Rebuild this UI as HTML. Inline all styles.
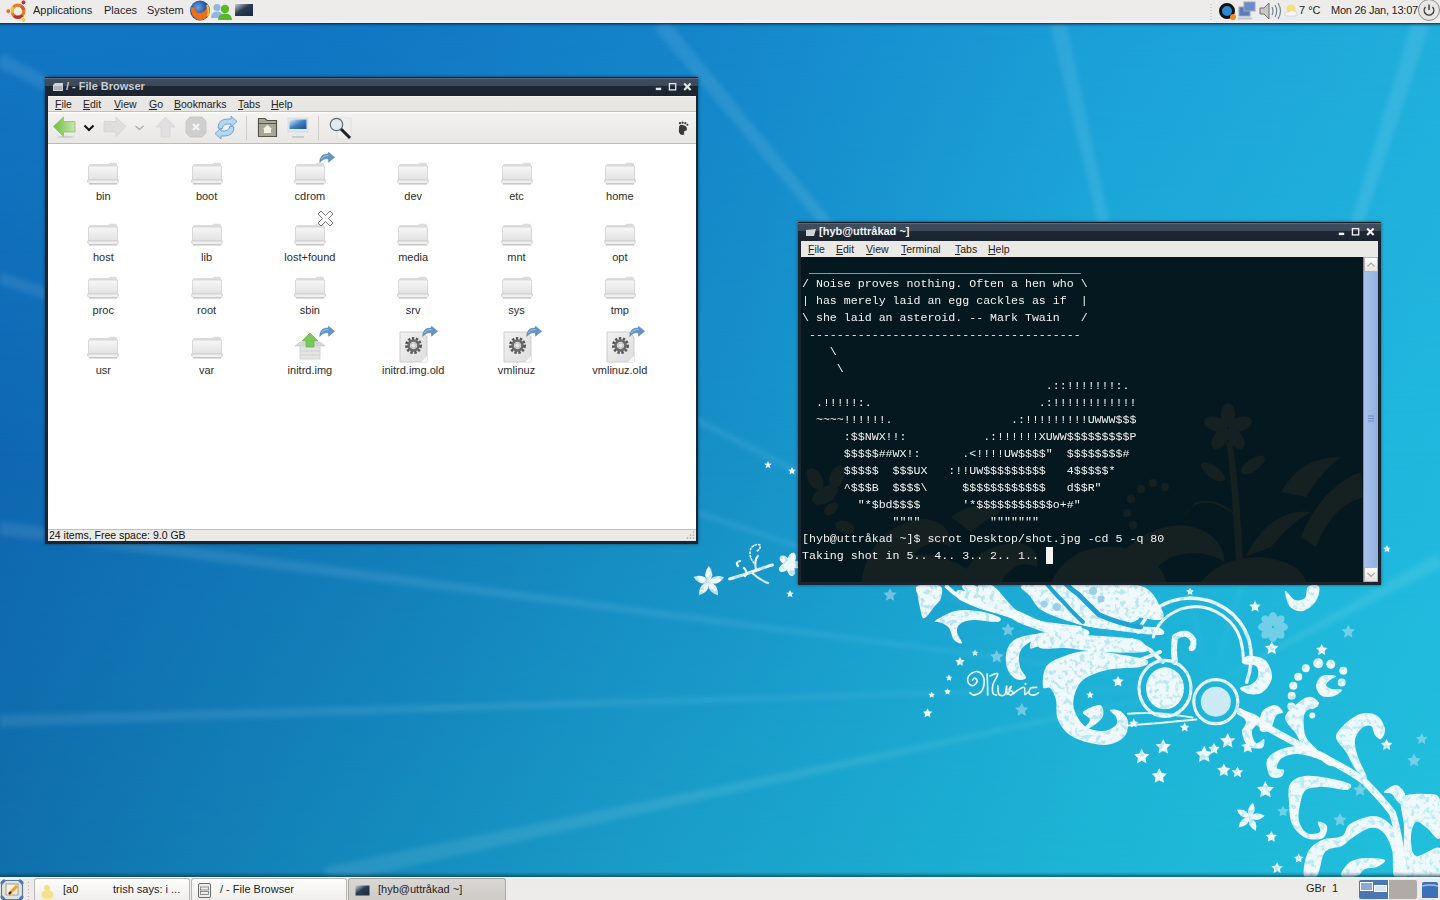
<!DOCTYPE html>
<html><head><meta charset="utf-8">
<style>
*{margin:0;padding:0;box-sizing:border-box}
html,body{width:1440px;height:900px;overflow:hidden;font-family:"Liberation Sans",sans-serif;font-size:12px;color:#222}
.abs{position:absolute}
#bg0{left:0;top:0;width:1440px;height:450px;background:linear-gradient(to right,#1278c5 0px,#1076c4 300px,#1586cc 725px,#1b9fd8 1100px,#21aedc 1440px)}
#bg0b{left:0;top:0;width:1440px;height:450px;background:linear-gradient(to right,#0f67b2 0px,#1279b8 365px,#1791c8 745px,#1eaed8 1100px,#20b8de 1440px);-webkit-mask-image:linear-gradient(to bottom,transparent,#000)}
#bg1{left:0;top:450px;width:1440px;height:450px;background:linear-gradient(to right,#0f67b2 0px,#1279b8 365px,#1791c8 745px,#1eaed8 1100px,#20b8de 1440px)}
#bg1b{left:0;top:450px;width:1440px;height:450px;background:linear-gradient(to right,#1070aa 0px,#1387b9 305px,#1a9fc8 655px,#1cb4d4 1055px,#22c0dc 1440px);-webkit-mask-image:linear-gradient(to bottom,transparent,#000)}

/* top panel */
#toppanel{left:0;top:0;width:1440px;height:23px;background:linear-gradient(#edecea 0,#edecea 16px,#e9ede9 16px,#eceae8 18px,#f0e8e8 19px,#eef2f6 21px,#eef2f6 23px)}
#topshadow{left:0;top:23px;width:1440px;height:4px;background:linear-gradient(rgba(10,30,50,.8),rgba(10,40,70,.25) 50%,rgba(0,0,0,0))}
.ptxt{position:absolute;top:4px;font-size:11px;color:#1e1e1e}

/* bottom panel */
#botpanel{left:0;top:877px;width:1440px;height:23px;background:linear-gradient(#e8fafa 0,#e8fafa 1px,#ecebe9 2px,#edecea 100%)}
#botshadow{left:0;top:872px;width:1440px;height:5px;background:linear-gradient(rgba(0,0,0,0),rgba(10,40,60,.25) 50%,rgba(15,60,80,.75))}

/* windows */
.win{position:absolute;background:#1b2530;box-shadow:0 0 3px rgba(0,0,0,.5)}
.title{position:absolute;left:0;top:0;right:0;height:19px;background:linear-gradient(#0e1620 0,#0e1620 1px,#6a7580 1px,#4e5c6b 2px,#3f4d5c 2px,#3a4857 9px,#1e2834 9px,#1b2430 19px)}
.ttxt{position:absolute;top:3px;font-weight:bold;font-size:11px}
.menubar{position:absolute;background:#ebe9e6}
.mi{position:absolute;top:2px;font-size:10.5px;color:#222}
.lbl{position:absolute;width:100px;text-align:center;font-size:11px;line-height:14px;color:#2c2c2c}
.ico{position:absolute;overflow:visible}
#tt{position:absolute;left:1px;top:1px;font-family:"Liberation Mono",monospace;font-size:11.62px;line-height:17px;color:#f2f2f2;white-space:pre}
.task{position:absolute;top:1px;height:22px;border:1px solid #b9b7b3;border-bottom:none;border-radius:3px 3px 0 0;background:linear-gradient(#fdfdfc,#efeeec)}
.ttask{position:absolute;top:4px;font-size:11px;color:#222}
</style></head><body>
<svg width="0" height="0" style="position:absolute">
<defs>
<linearGradient id="fg" x1="0" y1="0" x2="0" y2="1"><stop offset="0" stop-color="#f7f7f7"/><stop offset="1" stop-color="#e2e2e2"/></linearGradient>
<linearGradient id="dg" x1="0" y1="0" x2="1" y2="1"><stop offset="0" stop-color="#f2f2f2"/><stop offset="1" stop-color="#dcdcdc"/></linearGradient>
<symbol id="folder" viewBox="0 0 32 23">
 <path d="M2 3.5 Q2 2 3.5 2 L21 2 L23 0.8 L28 0.8 Q30 0.8 30 2.5 L30 18 L2 18 Z" fill="#dcdcdc"/>
 <path d="M1.5 4 L30.5 4 L30.5 18 L1.5 18 Z" fill="url(#fg)" stroke="#d0d0d0" stroke-width="0.8"/>
 <path d="M0.5 18 L31.5 18 L31 20.5 Q30.5 21.5 29 21.5 L3 21.5 Q1.5 21.5 1 20.5 Z" fill="#f0f0f0" stroke="#c8c8c8" stroke-width="0.8"/>
 <path d="M2 22 L30 22" stroke="#bdbdbd" stroke-width="1"/>
</symbol>
<symbol id="doc" viewBox="0 0 32 32">
 <path d="M3 1 L25 1 L30 6 L30 31 L3 31 Z" fill="url(#dg)" stroke="#c4c4c4" stroke-width="0.8"/>
 <path d="M24 31 L30 25 L30 31 Z" fill="#f8f8f8"/>
 <g transform="translate(16.5,14.5)">
  <circle r="7" fill="none" stroke="#555" stroke-width="3" stroke-dasharray="2.3 1.6"/>
  <circle r="5" fill="none" stroke="#6a6a6a" stroke-width="2.6"/>
  <circle r="2.6" fill="#e8e8e8" stroke="#888" stroke-width="0.5"/>
 </g>
</symbol>
<symbol id="pkg" viewBox="0 0 32 30">
 <rect x="6" y="15" width="20" height="12" fill="#e4e4e4" stroke="#cfcfcf" stroke-width="0.8"/>
 <path d="M6 19 H26 M6 23 H26" stroke="#d0d0d0" stroke-width="1"/>
 <path d="M1 14 L6 10 L26 10 L31 14 Z" fill="#d8d8d8" stroke="#c2c2c2" stroke-width="0.6"/>
 <path d="M16 1 L24 9 L20 9 L20 15 L12 15 L12 9 L8 9 Z" fill="#7cc75a" stroke="#5fa843" stroke-width="0.6"/>
</symbol>
<symbol id="emb" viewBox="0 0 16 11">
 <path d="M0.8 10.5 C0.5 5 4 1.5 9 2.2 L9.5 0.2 L15.6 5.2 L9.6 10.2 L9.4 7 C6 6.2 3 7.5 0.8 10.5 Z" fill="#6494c4" stroke="#4f7fae" stroke-width="0.5"/>
 <path d="M2.5 7 C3.5 4.5 6 3.4 9.5 3.6" fill="none" stroke="#a8c8e8" stroke-width="0.9"/>
</symbol>
<symbol id="xemb" viewBox="0 0 17 17">
 <path d="M4 1 L8.5 5.5 L13 1 L16 4 L11.5 8.5 L16 13 L13 16 L8.5 11.5 L4 16 L1 13 L5.5 8.5 L1 4 Z" fill="#fff" stroke="#6a6a6a" stroke-width="0.9"/>
</symbol>
</defs></svg>
<div id="bg0" class="abs"></div><div id="bg0b" class="abs"></div>
<div id="bg1" class="abs"></div><div id="bg1b" class="abs"></div>

<svg class="abs" style="left:0;top:0" width="1440" height="900">
<defs><filter id="grg" x="0" y="0" width="100%" height="100%" filterUnits="userSpaceOnUse"><feTurbulence type="fractalNoise" baseFrequency="0.2" numOctaves="3" seed="3" result="n"/><feColorMatrix in="n" type="matrix" values="0 0 0 0 0  0 0 0 0 0  0 0 0 0 0  0 0 0 -6 4.1" result="a0"/><feComponentTransfer in="a0" result="a"><feFuncA type="linear" slope="0.25" intercept="0.75"/></feComponentTransfer><feComposite in="SourceGraphic" in2="a" operator="in"/></filter><filter id="blr" x="-10%" y="-10%" width="120%" height="120%"><feGaussianBlur stdDeviation="2.5"/></filter></defs>
<g fill="#ffffff" opacity="0.09" filter="url(#blr)"><polygon points="1210,685 1065.8,21.2 1050.2,24.8"/><polygon points="1210,685 1429.6,25.7 1412.4,20.3"/><polygon points="1210,685 666.2,17.9 653.8,28.1"/><polygon points="1210,685 0.9,521.1 -0.9,534.9"/><polygon points="1210,685 -0.2,715.0 0.2,727.0"/><polygon points="1210,685 324.1,867.2 327.9,884.8"/><polygon points="1210,685 1.9,272.3 -1.9,283.7"/><polygon points="1210,685 3.2,53.8 -3.2,66.2"/><polygon points="1210,685 1443.3,566.2 1436.7,553.8"/></g>
<g fill="#c4e6f2" opacity="0.5"><polygon points="890.0,588.0 892.1,592.2 896.7,592.8 893.3,596.1 894.1,600.7 890.0,598.5 885.9,600.7 886.7,596.1 883.3,592.8 887.9,592.2"/><polygon points="1008.0,623.0 1010.1,627.2 1014.7,627.8 1011.3,631.1 1012.1,635.7 1008.0,633.5 1003.9,635.7 1004.7,631.1 1001.3,627.8 1005.9,627.2"/><polygon points="996.7,649.7 998.8,653.9 1003.4,654.5 1000.0,657.8 1000.8,662.4 996.7,660.2 992.6,662.4 993.4,657.8 990.0,654.5 994.6,653.9"/><polygon points="1021.7,703.0 1023.8,707.2 1028.4,707.8 1025.0,711.1 1025.8,715.7 1021.7,713.5 1017.6,715.7 1018.4,711.1 1015.0,707.8 1019.6,707.2"/><polygon points="1098.0,650.0 1100.4,654.8 1105.6,655.5 1101.8,659.2 1102.7,664.5 1098.0,662.0 1093.3,664.5 1094.2,659.2 1090.4,655.5 1095.6,654.8"/><polygon points="1348.3,624.7 1350.4,628.9 1355.0,629.5 1351.6,632.8 1352.4,637.4 1348.3,635.2 1344.2,637.4 1345.0,632.8 1341.6,629.5 1346.2,628.9"/><polygon points="1283.0,805.4 1284.8,809.0 1288.7,809.5 1285.9,812.3 1286.5,816.3 1283.0,814.4 1279.5,816.3 1280.1,812.3 1277.3,809.5 1281.2,809.0"/><polygon points="1414.0,753.6 1416.1,757.8 1420.7,758.4 1417.3,761.7 1418.1,766.3 1414.0,764.1 1409.9,766.3 1410.7,761.7 1407.3,758.4 1411.9,757.8"/><polygon points="1421.8,733.1 1423.6,736.7 1427.5,737.2 1424.7,740.0 1425.3,744.0 1421.8,742.1 1418.3,744.0 1418.9,740.0 1416.1,737.2 1420.0,736.7"/><polygon points="1360.0,783.0 1362.1,787.2 1366.7,787.8 1363.3,791.1 1364.1,795.7 1360.0,793.5 1355.9,795.7 1356.7,791.1 1353.3,787.8 1357.9,787.2"/><polygon points="1340.0,813.0 1342.1,817.2 1346.7,817.8 1343.3,821.1 1344.1,825.7 1340.0,823.5 1335.9,825.7 1336.7,821.1 1333.3,817.8 1337.9,817.2"/>
<ellipse cx="1281.0" cy="627.0" rx="7" ry="4.5" transform="rotate(0 1281.0 627.0)"/><ellipse cx="1278.7" cy="632.7" rx="7" ry="4.5" transform="rotate(45 1278.7 632.7)"/><ellipse cx="1273.0" cy="635.0" rx="7" ry="4.5" transform="rotate(90 1273.0 635.0)"/><ellipse cx="1267.3" cy="632.7" rx="7" ry="4.5" transform="rotate(135 1267.3 632.7)"/><ellipse cx="1265.0" cy="627.0" rx="7" ry="4.5" transform="rotate(180 1265.0 627.0)"/><ellipse cx="1267.3" cy="621.3" rx="7" ry="4.5" transform="rotate(225 1267.3 621.3)"/><ellipse cx="1273.0" cy="619.0" rx="7" ry="4.5" transform="rotate(270 1273.0 619.0)"/><ellipse cx="1278.7" cy="621.3" rx="7" ry="4.5" transform="rotate(315 1278.7 621.3)"/>
</g>
<g fill="#f6fbfd" opacity="0.97" filter="url(#grg)"><polygon points="975.0,649.5 976.0,651.6 978.3,651.9 976.7,653.5 977.1,655.8 975.0,654.8 972.9,655.8 973.3,653.5 971.7,651.9 974.0,651.6"/><polygon points="960.0,656.7 961.5,659.7 964.8,660.2 962.4,662.5 962.9,665.7 960.0,664.2 957.1,665.7 957.6,662.5 955.2,660.2 958.5,659.7"/><polygon points="949.0,674.5 950.0,676.6 952.3,676.9 950.7,678.5 951.1,680.8 949.0,679.8 946.9,680.8 947.3,678.5 945.7,676.9 948.0,676.6"/><polygon points="947.5,688.2 948.5,690.3 950.8,690.6 949.2,692.2 949.6,694.5 947.5,693.5 945.4,694.5 945.8,692.2 944.2,690.6 946.5,690.3"/><polygon points="931.7,691.5 932.7,693.6 935.0,693.9 933.4,695.5 933.8,697.8 931.7,696.8 929.6,697.8 930.0,695.5 928.4,693.9 930.7,693.6"/><polygon points="927.5,708.3 929.0,711.3 932.3,711.8 929.9,714.1 930.4,717.3 927.5,715.8 924.6,717.3 925.1,714.1 922.7,711.8 926.0,711.3"/><polygon points="1118.0,675.7 1119.8,679.3 1123.7,679.8 1120.9,682.6 1121.5,686.6 1118.0,684.7 1114.5,686.6 1115.1,682.6 1112.3,679.8 1116.2,679.3"/><polygon points="1090.0,691.0 1091.2,693.4 1093.8,693.8 1091.9,695.6 1092.4,698.2 1090.0,697.0 1087.6,698.2 1088.1,695.6 1086.2,693.8 1088.8,693.4"/><polygon points="1190.0,587.7 1191.2,590.1 1193.8,590.5 1191.9,592.3 1192.4,594.9 1190.0,593.7 1187.6,594.9 1188.1,592.3 1186.2,590.5 1188.8,590.1"/><polygon points="1133.8,718.5 1135.3,721.5 1138.6,722.0 1136.2,724.3 1136.7,727.5 1133.8,726.0 1130.9,727.5 1131.4,724.3 1129.0,722.0 1132.3,721.5"/><polygon points="1184.7,722.4 1186.2,725.4 1189.5,725.9 1187.1,728.2 1187.6,731.4 1184.7,729.9 1181.8,731.4 1182.3,728.2 1179.9,725.9 1183.2,725.4"/><polygon points="1163.2,738.9 1165.6,743.7 1170.8,744.4 1167.0,748.1 1167.9,753.4 1163.2,750.9 1158.5,753.4 1159.4,748.1 1155.6,744.4 1160.8,743.7"/><polygon points="1141.7,748.7 1144.1,753.5 1149.3,754.2 1145.5,757.9 1146.4,763.2 1141.7,760.7 1137.0,763.2 1137.9,757.9 1134.1,754.2 1139.3,753.5"/><polygon points="1159.3,768.2 1161.7,773.0 1166.9,773.7 1163.1,777.4 1164.0,782.7 1159.3,780.2 1154.6,782.7 1155.5,777.4 1151.7,773.7 1156.9,773.0"/><polygon points="1204.2,745.7 1206.8,751.1 1212.8,751.9 1208.5,756.1 1209.5,762.0 1204.2,759.2 1198.9,762.0 1199.9,756.1 1195.6,751.9 1201.6,751.1"/><polygon points="1214.0,743.0 1215.8,746.6 1219.7,747.1 1216.9,749.9 1217.5,753.9 1214.0,752.0 1210.5,753.9 1211.1,749.9 1208.3,747.1 1212.2,746.6"/><polygon points="1227.7,733.1 1230.1,737.9 1235.3,738.6 1231.5,742.3 1232.4,747.6 1227.7,745.1 1223.0,747.6 1223.9,742.3 1220.1,738.6 1225.3,737.9"/><polygon points="1223.8,763.4 1225.9,767.6 1230.5,768.2 1227.1,771.5 1227.9,776.1 1223.8,773.9 1219.7,776.1 1220.5,771.5 1217.1,768.2 1221.7,767.6"/><polygon points="1237.5,766.3 1239.3,769.9 1243.2,770.4 1240.4,773.2 1241.0,777.2 1237.5,775.3 1234.0,777.2 1234.6,773.2 1231.8,770.4 1235.7,769.9"/><polygon points="1265.4,781.0 1268.0,786.4 1274.0,787.2 1269.7,791.4 1270.7,797.3 1265.4,794.5 1260.1,797.3 1261.1,791.4 1256.8,787.2 1262.8,786.4"/><polygon points="1247.8,739.9 1249.9,744.1 1254.5,744.7 1251.1,748.0 1251.9,752.6 1247.8,750.4 1243.7,752.6 1244.5,748.0 1241.1,744.7 1245.7,744.1"/><polygon points="1386.6,739.0 1388.4,742.6 1392.3,743.1 1389.5,745.9 1390.1,749.9 1386.6,748.0 1383.1,749.9 1383.7,745.9 1380.9,743.1 1384.8,742.6"/><polygon points="1277.1,862.1 1278.9,865.7 1282.8,866.2 1280.0,869.0 1280.6,873.0 1277.1,871.1 1273.6,873.0 1274.2,869.0 1271.4,866.2 1275.3,865.7"/><polygon points="1298.7,853.4 1300.2,856.4 1303.5,856.9 1301.1,859.2 1301.6,862.4 1298.7,860.9 1295.8,862.4 1296.3,859.2 1293.9,856.9 1297.2,856.4"/><polygon points="1271.3,830.9 1273.1,834.5 1277.0,835.0 1274.2,837.8 1274.8,841.8 1271.3,839.9 1267.8,841.8 1268.4,837.8 1265.6,835.0 1269.5,834.5"/><polygon points="768.0,461.0 769.2,463.4 771.8,463.8 769.9,465.6 770.4,468.2 768.0,467.0 765.6,468.2 766.1,465.6 764.2,463.8 766.8,463.4"/><polygon points="792.0,467.0 793.2,469.4 795.8,469.8 793.9,471.6 794.4,474.2 792.0,473.0 789.6,474.2 790.1,471.6 788.2,469.8 790.8,469.4"/><polygon points="790.0,590.0 791.2,592.4 793.8,592.8 791.9,594.6 792.4,597.2 790.0,596.0 787.6,597.2 788.1,594.6 786.2,592.8 788.8,592.4"/><polygon points="1387.0,545.0 1388.2,547.4 1390.8,547.8 1388.9,549.6 1389.4,552.2 1387.0,551.0 1384.6,552.2 1385.1,549.6 1383.2,547.8 1385.8,547.4"/><polygon points="1321.7,644.0 1323.5,647.6 1327.4,648.1 1324.6,650.9 1325.2,654.9 1321.7,653.0 1318.2,654.9 1318.8,650.9 1316.0,648.1 1319.9,647.6"/><polygon points="1271.7,641.3 1273.8,645.5 1278.4,646.1 1275.0,649.4 1275.8,654.0 1271.7,651.8 1267.6,654.0 1268.4,649.4 1265.0,646.1 1269.6,645.5"/><polygon points="1255.0,600.7 1256.8,604.3 1260.7,604.8 1257.9,607.6 1258.5,611.6 1255.0,609.7 1251.5,611.6 1252.1,607.6 1249.3,604.8 1253.2,604.3"/><path d="M708.7 582.1 Q713.2 573.3 724.0 577.4 Q717.4 586.9 708.7 582.1 Z"/><path d="M708.7 582.1 Q718.5 583.6 717.9 595.2 Q706.9 591.8 708.7 582.1 Z"/><path d="M708.7 582.1 Q710.3 591.9 699.1 594.9 Q698.9 583.4 708.7 582.1 Z"/><path d="M708.7 582.1 Q699.9 586.6 693.6 576.9 Q704.5 573.1 708.7 582.1 Z"/><path d="M708.7 582.1 Q701.7 575.1 708.9 566.1 Q715.9 575.3 708.7 582.1 Z"/><path d="M1249.8 817.3 Q1255.6 810.0 1264.7 815.8 Q1256.9 823.3 1249.8 817.3 Z"/><path d="M1249.8 817.3 Q1258.5 820.5 1255.8 831.0 Q1246.3 825.9 1249.8 817.3 Z"/><path d="M1249.8 817.3 Q1249.4 826.6 1238.6 827.3 Q1240.5 816.6 1249.8 817.3 Z"/><path d="M1249.8 817.3 Q1240.8 819.8 1236.8 809.7 Q1247.6 808.3 1249.8 817.3 Z"/><path d="M1249.8 817.3 Q1244.7 809.6 1253.0 802.6 Q1257.7 812.4 1249.8 817.3 Z"/><ellipse cx="791.7" cy="558.6" rx="6.2" ry="3.8" transform="rotate(-69 791.7 558.6)"/><ellipse cx="795.5" cy="564.5" rx="6.2" ry="3.8" transform="rotate(3 795.5 564.5)"/><ellipse cx="791.0" cy="570.0" rx="6.2" ry="3.8" transform="rotate(75 791.0 570.0)"/><ellipse cx="784.5" cy="567.4" rx="6.2" ry="3.8" transform="rotate(147 784.5 567.4)"/><ellipse cx="784.9" cy="560.4" rx="6.2" ry="3.8" transform="rotate(219 784.9 560.4)"/><path d="M917.5 586.0 C921.2 584.2 936.1 584.0 940.0 586.0 C943.9 588.0 941.8 594.7 941.0 598.0 C940.2 601.3 937.8 602.6 935.0 606.0 C932.2 609.4 926.5 618.0 924.0 618.3 C921.5 618.6 921.0 611.5 920.0 608.0 C919.0 604.5 918.4 600.7 918.0 597.0 C917.6 593.3 913.8 587.8 917.5 586.0 Z"/><path d="M935.0 621.0 C937.2 619.0 947.8 612.7 955.0 611.0 C962.2 609.3 970.7 610.0 978.0 611.0 C985.3 612.0 995.8 615.2 999.0 617.0 C1002.2 618.8 1001.3 621.5 997.0 622.0 C992.7 622.5 979.2 619.7 973.0 620.0 C966.8 620.3 962.7 622.0 960.0 624.0 C957.3 626.0 956.7 628.8 957.0 632.0 C957.3 635.2 962.5 641.7 962.0 643.0 C961.5 644.3 956.2 642.5 954.0 640.0 C951.8 637.5 951.0 630.8 949.0 628.0 C947.0 625.2 944.3 624.2 942.0 623.0 C939.7 621.8 932.8 623.0 935.0 621.0 Z"/><path d="M978.0 586.0 C979.0 583.7 987.7 583.0 993.0 586.0 C998.3 589.0 1004.7 598.7 1010.0 604.0 C1015.3 609.3 1018.8 614.2 1025.0 618.0 C1031.2 621.8 1043.5 624.8 1047.0 627.0 C1050.5 629.2 1050.2 631.5 1046.0 631.0 C1041.8 630.5 1029.2 627.0 1022.0 624.0 C1014.8 621.0 1008.8 617.0 1003.0 613.0 C997.2 609.0 991.2 604.5 987.0 600.0 C982.8 595.5 977.0 588.3 978.0 586.0 Z"/><path d="M1021.0 586.0 C1023.0 584.0 1039.2 583.2 1046.0 586.0 C1052.8 588.8 1056.3 598.5 1062.0 603.0 C1067.7 607.5 1073.7 610.5 1080.0 613.0 C1086.3 615.5 1091.3 616.3 1100.0 618.0 C1108.7 619.7 1125.3 621.0 1132.0 623.0 C1138.7 625.0 1144.0 629.0 1140.0 630.0 C1136.0 631.0 1118.3 630.0 1108.0 629.0 C1097.7 628.0 1087.3 627.2 1078.0 624.0 C1068.7 620.8 1059.3 614.3 1052.0 610.0 C1044.7 605.7 1039.2 602.0 1034.0 598.0 C1028.8 594.0 1019.0 588.0 1021.0 586.0 Z"/><path d="M1065.0 586.0 C1071.2 583.7 1097.5 581.7 1110.0 586.0 C1122.5 590.3 1137.2 605.8 1140.0 612.0 C1142.8 618.2 1135.3 622.8 1127.0 623.0 C1118.7 623.2 1099.0 616.8 1090.0 613.0 C1081.0 609.2 1077.2 604.5 1073.0 600.0 C1068.8 595.5 1058.8 588.3 1065.0 586.0 Z"/><path d="M1040.0 636.0 C1044.2 634.0 1055.0 635.3 1065.0 636.0 C1075.0 636.7 1087.5 638.5 1100.0 640.0 C1112.5 641.5 1132.5 643.0 1140.0 645.0 C1147.5 647.0 1151.7 650.8 1145.0 652.0 C1138.3 653.2 1113.3 652.7 1100.0 652.0 C1086.7 651.3 1075.0 648.7 1065.0 648.0 C1055.0 647.3 1044.2 650.0 1040.0 648.0 C1035.8 646.0 1035.8 638.0 1040.0 636.0 Z"/><path d="M1046.0 633.0 C1050.7 633.2 1048.7 637.5 1046.0 639.0 C1043.3 640.5 1034.3 639.8 1030.0 642.0 C1025.7 644.2 1021.7 647.8 1020.0 652.0 C1018.3 656.2 1019.0 662.7 1020.0 667.0 C1021.0 671.3 1026.7 676.0 1026.0 678.0 C1025.3 680.0 1019.2 680.7 1016.0 679.0 C1012.8 677.3 1008.5 672.8 1007.0 668.0 C1005.5 663.2 1005.2 655.0 1007.0 650.0 C1008.8 645.0 1011.5 640.8 1018.0 638.0 C1024.5 635.2 1041.3 632.8 1046.0 633.0 Z"/><path d="M1043.0 687.0 C1042.3 683.5 1042.8 672.0 1046.0 667.0 C1049.2 662.0 1054.7 659.7 1062.0 657.0 C1069.3 654.3 1077.0 650.8 1090.0 651.0 C1103.0 651.2 1130.3 656.0 1140.0 658.0 C1149.7 660.0 1148.0 661.5 1148.0 663.0 C1148.0 664.5 1146.8 665.8 1140.0 667.0 C1133.2 668.2 1116.5 667.8 1107.0 670.0 C1097.5 672.2 1088.5 675.5 1083.0 680.0 C1077.5 684.5 1075.3 691.7 1074.0 697.0 C1072.7 702.3 1073.0 707.0 1075.0 712.0 C1077.0 717.0 1081.2 723.8 1086.0 727.0 C1090.8 730.2 1099.0 731.3 1104.0 731.0 C1109.0 730.7 1114.0 727.3 1116.0 725.0 C1118.0 722.7 1117.0 719.5 1116.0 717.0 C1115.0 714.5 1109.3 711.0 1110.0 710.0 C1110.7 709.0 1117.0 709.2 1120.0 711.0 C1123.0 712.8 1127.3 716.7 1128.0 721.0 C1128.7 725.3 1128.0 733.0 1124.0 737.0 C1120.0 741.0 1112.5 745.0 1104.0 745.0 C1095.5 745.0 1080.7 741.2 1073.0 737.0 C1065.3 732.8 1060.8 726.2 1058.0 720.0 C1055.2 713.8 1057.3 705.3 1056.0 700.0 C1054.7 694.7 1052.2 690.2 1050.0 688.0 C1047.8 685.8 1043.7 690.5 1043.0 687.0 Z"/><path d="M1083.0 712.0 C1084.7 709.5 1096.7 704.3 1100.0 705.0 C1103.3 705.7 1104.2 712.5 1103.0 716.0 C1101.8 719.5 1096.5 723.5 1093.0 726.0 C1089.5 728.5 1082.5 732.0 1082.0 731.0 C1081.5 730.0 1089.8 723.2 1090.0 720.0 C1090.2 716.8 1081.3 714.5 1083.0 712.0 Z"/><path d="M1165 688.3 m-19 0 a19 21 0 1 0 38 0 a19 21 0 1 0 -38 0"/><path d="M1285.0 593.0 C1285.5 595.5 1287.0 603.7 1290.0 606.7 C1293.0 609.7 1298.7 612.0 1303.0 611.0 C1307.3 610.0 1313.3 605.0 1316.0 601.0 C1318.7 597.0 1320.3 589.1 1319.0 586.7 C1317.7 584.3 1310.3 584.8 1308.0 586.7 C1305.7 588.6 1307.2 595.8 1305.0 598.0 C1302.8 600.2 1298.0 601.0 1295.0 600.0 C1292.0 599.0 1288.7 593.2 1287.0 592.0 C1285.3 590.8 1284.5 590.5 1285.0 593.0 Z"/><path d="M1247.0 656.0 C1250.5 655.3 1260.8 656.5 1265.0 660.0 C1269.2 663.5 1272.3 671.7 1272.0 677.0 C1271.7 682.3 1266.8 689.2 1263.0 692.0 C1259.2 694.8 1252.8 694.7 1249.0 694.0 C1245.2 693.3 1239.5 689.7 1240.0 688.0 C1240.5 686.3 1249.0 686.0 1252.0 684.0 C1255.0 682.0 1257.3 679.0 1258.0 676.0 C1258.7 673.0 1258.3 668.0 1256.0 666.0 C1253.7 664.0 1245.5 665.7 1244.0 664.0 C1242.5 662.3 1243.5 656.7 1247.0 656.0 Z"/><path d="M1336.0 676.0 C1334.7 675.3 1325.3 674.3 1322.0 676.0 C1318.7 677.7 1316.0 682.7 1316.0 686.0 C1316.0 689.3 1319.0 694.3 1322.0 696.0 C1325.0 697.7 1330.7 697.0 1334.0 696.0 C1337.3 695.0 1342.3 691.2 1342.0 690.0 C1341.7 688.8 1334.7 689.8 1332.0 689.0 C1329.3 688.2 1326.3 686.5 1326.0 685.0 C1325.7 683.5 1328.3 681.5 1330.0 680.0 C1331.7 678.5 1337.3 676.7 1336.0 676.0 Z"/><path d="M1286.7 718.0 C1287.5 713.5 1294.1 706.5 1298.0 703.0 C1301.9 699.5 1306.5 696.7 1310.0 696.7 C1313.5 696.7 1318.5 701.0 1319.0 703.0 C1319.5 705.0 1315.2 708.3 1313.0 709.0 C1310.8 709.7 1307.8 705.8 1306.0 707.0 C1304.2 708.2 1303.0 712.2 1302.0 716.0 C1301.0 719.8 1301.5 727.7 1300.0 730.0 C1298.5 732.3 1295.2 732.0 1293.0 730.0 C1290.8 728.0 1285.9 722.5 1286.7 718.0 Z"/><path d="M1260.0 730.0 C1258.7 727.0 1259.5 716.2 1262.0 712.0 C1264.5 707.8 1271.5 705.0 1275.0 705.0 C1278.5 705.0 1282.8 710.2 1283.0 712.0 C1283.2 713.8 1278.2 713.0 1276.0 716.0 C1273.8 719.0 1272.7 727.7 1270.0 730.0 C1267.3 732.3 1261.3 733.0 1260.0 730.0 Z"/><path d="M1336.0 737.0 C1336.0 732.2 1341.8 726.9 1346.0 723.0 C1350.2 719.1 1355.8 714.9 1361.0 713.7 C1366.2 712.5 1373.0 713.1 1377.0 715.6 C1381.0 718.1 1384.3 725.1 1385.0 729.0 C1385.7 732.9 1382.7 738.0 1381.0 739.0 C1379.3 740.0 1376.7 737.2 1375.0 735.0 C1373.3 732.8 1373.2 727.2 1371.0 726.0 C1368.8 724.8 1364.7 725.7 1362.0 728.0 C1359.3 730.3 1355.7 735.2 1355.0 740.0 C1354.3 744.8 1356.0 750.7 1358.0 757.0 C1360.0 763.3 1367.3 775.8 1367.0 778.0 C1366.7 780.2 1359.5 774.3 1356.0 770.0 C1352.5 765.7 1349.3 757.5 1346.0 752.0 C1342.7 746.5 1336.0 741.8 1336.0 737.0 Z"/><path d="M1285.0 717.6 C1285.3 712.9 1292.8 706.9 1297.0 704.0 C1301.2 701.1 1306.5 699.7 1310.0 700.0 C1313.5 700.3 1317.8 704.7 1318.0 706.0 C1318.2 707.3 1313.3 706.3 1311.0 708.0 C1308.7 709.7 1304.8 711.2 1304.0 716.0 C1303.2 720.8 1303.7 731.2 1306.0 737.0 C1308.3 742.8 1318.3 749.3 1318.0 751.0 C1317.7 752.7 1307.8 750.2 1304.0 747.0 C1300.2 743.8 1298.2 736.9 1295.0 732.0 C1291.8 727.1 1284.7 722.3 1285.0 717.6 Z"/><path d="M1240.0 710.0 C1242.3 709.3 1258.0 714.5 1260.0 718.0 C1262.0 721.5 1252.7 726.8 1252.0 731.0 C1251.3 735.2 1254.0 741.7 1256.0 743.0 C1258.0 744.3 1263.0 738.2 1264.0 739.0 C1265.0 739.8 1264.7 746.8 1262.0 748.0 C1259.3 749.2 1251.3 748.7 1248.0 746.0 C1244.7 743.3 1242.3 736.0 1242.0 732.0 C1241.7 728.0 1246.3 725.7 1246.0 722.0 C1245.7 718.3 1237.7 710.7 1240.0 710.0 Z"/><path d="M1267.0 760.0 C1268.5 755.7 1273.7 752.3 1279.0 750.0 C1284.3 747.7 1291.8 745.7 1299.0 746.0 C1306.2 746.3 1315.5 749.0 1322.0 752.0 C1328.5 755.0 1336.7 761.7 1338.0 764.0 C1339.3 766.3 1333.3 766.8 1330.0 766.0 C1326.7 765.2 1323.3 761.0 1318.0 759.0 C1312.7 757.0 1304.0 754.2 1298.0 754.0 C1292.0 753.8 1285.5 755.7 1282.0 758.0 C1278.5 760.3 1276.7 766.0 1277.0 768.0 C1277.3 770.0 1283.3 768.5 1284.0 770.0 C1284.7 771.5 1283.3 776.0 1281.0 777.0 C1278.7 778.0 1272.3 778.8 1270.0 776.0 C1267.7 773.2 1265.5 764.3 1267.0 760.0 Z"/><path d="M1290.0 784.0 C1292.6 779.7 1298.2 777.0 1304.5 776.0 C1310.8 775.0 1320.4 776.7 1328.0 778.0 C1335.6 779.3 1347.0 782.0 1350.0 784.0 C1353.0 786.0 1350.2 789.5 1346.0 790.0 C1341.8 790.5 1331.7 787.0 1325.0 787.0 C1318.3 787.0 1310.2 787.0 1306.0 790.0 C1301.8 793.0 1301.2 799.8 1300.0 805.0 C1298.8 810.2 1297.8 816.3 1299.0 821.0 C1300.2 825.7 1303.5 831.2 1307.0 833.0 C1310.5 834.8 1318.2 833.8 1320.0 832.0 C1321.8 830.2 1316.8 823.0 1318.0 822.0 C1319.2 821.0 1326.2 823.3 1327.0 826.0 C1327.8 828.7 1326.5 836.0 1323.0 838.0 C1319.5 840.0 1311.2 840.3 1306.0 838.0 C1300.8 835.7 1294.8 830.0 1292.0 824.0 C1289.2 818.0 1289.3 808.7 1289.0 802.0 C1288.7 795.3 1287.4 788.3 1290.0 784.0 Z"/><path d="M1304.0 876.0 C1302.5 872.0 1305.0 858.0 1308.0 852.0 C1311.0 846.0 1316.3 842.7 1322.0 840.0 C1327.7 837.3 1337.3 838.7 1342.0 836.0 C1346.7 833.3 1344.8 827.3 1350.0 824.0 C1355.2 820.7 1366.3 816.0 1373.0 816.0 C1379.7 816.0 1385.2 819.2 1390.0 824.0 C1394.8 828.8 1399.7 836.3 1402.0 845.0 C1404.3 853.7 1405.3 870.8 1404.0 876.0 C1402.7 881.2 1396.0 880.3 1394.0 876.0 C1392.0 871.7 1393.8 857.3 1392.0 850.0 C1390.2 842.7 1386.7 835.7 1383.0 832.0 C1379.3 828.3 1375.2 827.0 1370.0 828.0 C1364.8 829.0 1356.7 835.0 1352.0 838.0 C1347.3 841.0 1346.5 843.7 1342.0 846.0 C1337.5 848.3 1329.2 847.0 1325.0 852.0 C1320.8 857.0 1320.5 872.0 1317.0 876.0 C1313.5 880.0 1305.5 880.0 1304.0 876.0 Z"/><path d="M1341.0 876.0 C1339.8 873.7 1345.7 865.0 1350.0 862.0 C1354.3 859.0 1361.2 858.3 1367.0 858.0 C1372.8 857.7 1383.3 858.5 1385.0 860.0 C1386.7 861.5 1380.3 865.5 1377.0 867.0 C1373.7 868.5 1368.3 867.5 1365.0 869.0 C1361.7 870.5 1361.0 874.8 1357.0 876.0 C1353.0 877.2 1342.2 878.3 1341.0 876.0 Z"/><path d="M1402.0 798.0 C1405.8 792.7 1420.7 793.7 1427.0 794.0 C1433.3 794.3 1437.8 792.7 1440.0 800.0 C1442.2 807.3 1442.2 833.3 1440.0 838.0 C1437.8 842.7 1431.0 830.7 1427.0 828.0 C1423.0 825.3 1418.7 820.5 1416.0 822.0 C1413.3 823.5 1411.0 831.3 1411.0 837.0 C1411.0 842.7 1411.2 854.2 1416.0 856.0 C1420.8 857.8 1436.0 844.7 1440.0 848.0 C1444.0 851.3 1445.3 871.3 1440.0 876.0 C1434.7 880.7 1414.0 880.3 1408.0 876.0 C1402.0 871.7 1404.7 858.3 1404.0 850.0 C1403.3 841.7 1404.3 834.7 1404.0 826.0 C1403.7 817.3 1398.2 803.3 1402.0 798.0 Z"/><path d="M1384.0 792.0 C1384.7 790.5 1392.5 784.7 1396.0 785.0 C1399.5 785.3 1404.0 790.8 1405.0 794.0 C1406.0 797.2 1403.5 803.0 1402.0 804.0 C1400.5 805.0 1397.7 801.7 1396.0 800.0 C1394.3 798.3 1394.0 795.3 1392.0 794.0 C1390.0 792.7 1383.3 793.5 1384.0 792.0 Z"/><path d="M1024.0 586.0 C1030.0 584.3 1056.3 582.7 1066.0 586.0 C1075.7 589.3 1074.3 600.3 1082.0 606.0 C1089.7 611.7 1102.3 616.7 1112.0 620.0 C1121.7 623.3 1132.0 624.7 1140.0 626.0 C1148.0 627.3 1156.7 626.5 1160.0 628.0 C1163.3 629.5 1168.0 634.7 1160.0 635.0 C1152.0 635.3 1125.7 631.8 1112.0 630.0 C1098.3 628.2 1089.5 627.2 1078.0 624.0 C1066.5 620.8 1051.0 615.7 1043.0 611.0 C1035.0 606.3 1033.2 600.2 1030.0 596.0 C1026.8 591.8 1018.0 587.7 1024.0 586.0 Z"/><path d="M1092.0 586.0 C1099.2 583.7 1129.7 582.7 1141.0 586.0 C1152.3 589.3 1156.8 600.3 1160.0 606.0 C1163.2 611.7 1166.7 619.0 1160.0 620.0 C1153.3 621.0 1130.3 615.3 1120.0 612.0 C1109.7 608.7 1102.7 604.3 1098.0 600.0 C1093.3 595.7 1084.8 588.3 1092.0 586.0 Z"/><path d="M960.0 590.0 C965.8 590.3 985.7 598.7 995.0 602.0 C1004.3 605.3 1006.8 606.3 1016.0 610.0 C1025.2 613.7 1038.5 620.8 1050.0 624.0 C1061.5 627.2 1079.2 627.0 1085.0 629.0 C1090.8 631.0 1091.2 635.3 1085.0 636.0 C1078.8 636.7 1060.0 635.8 1048.0 633.0 C1036.0 630.2 1022.3 622.7 1013.0 619.0 C1003.7 615.3 1000.8 614.2 992.0 611.0 C983.2 607.8 965.3 603.5 960.0 600.0 C954.7 596.5 954.2 589.7 960.0 590.0 Z"/><path d="M962.0 586.0 C962.7 584.3 968.2 582.7 976.0 586.0 C983.8 589.3 1000.0 600.3 1009.0 606.0 C1018.0 611.7 1027.2 617.0 1030.0 620.0 C1032.8 623.0 1030.3 625.3 1026.0 624.0 C1021.7 622.7 1013.0 616.7 1004.0 612.0 C995.0 607.3 979.0 600.3 972.0 596.0 C965.0 591.7 961.3 587.7 962.0 586.0 Z"/><path d="M1040.0 633.0 C1049.2 630.8 1070.5 634.2 1085.0 635.0 C1099.5 635.8 1117.7 637.0 1127.0 638.0 C1136.3 639.0 1138.7 639.2 1141.0 641.0 C1143.3 642.8 1150.3 648.3 1141.0 649.0 C1131.7 649.7 1101.3 645.5 1085.0 645.0 C1068.7 644.5 1052.2 645.5 1043.0 646.0 C1033.8 646.5 1030.5 650.2 1030.0 648.0 C1029.5 645.8 1030.8 635.2 1040.0 633.0 Z"/>
 <circle cx="1318.3" cy="663.3" r="5"/><circle cx="1330.8" cy="664.2" r="4.5"/><circle cx="1343.3" cy="670.8" r="4"/><circle cx="1341.7" cy="682.5" r="4"/>
 <circle cx="1305.8" cy="668.3" r="4"/><circle cx="1298.3" cy="676.7" r="4"/><circle cx="1293.3" cy="685.8" r="4"/><circle cx="1291.7" cy="695.8" r="4"/><circle cx="1291.7" cy="706.7" r="4"/><circle cx="1290.8" cy="705.9" r="3.5"/><circle cx="1312.3" cy="715.6" r="3"/>
</g>
<g fill="none" stroke="#f6fbfd" stroke-linecap="round" opacity="0.97" filter="url(#grg)">
 <path d="M946.7 586.7 Q960 600 980 606.7 Q1003 613 1025 620 Q1047 625 1080 628" stroke-width="4"/>
 <path d="M1138.3 632 C1145 612 1165 599 1190 598 C1215 598 1240 612 1249 640 C1253 655 1251 670 1246.7 682" stroke-width="3.5"/>
 <path d="M1153.3 637 C1158 620 1175 607 1196 606.5 C1215 607 1234 620 1240 638 C1243 648 1243.5 655 1243.3 662" stroke-width="3"/>
 <circle cx="1215.8" cy="701.7" r="22" stroke-width="3.2"/>
 <ellipse cx="1165" cy="688.3" rx="26" ry="28" stroke-width="3.2"/>
 <path d="M1128 713.7 Q1157 711 1192.5 717.6 M1128 725.4 Q1157 723.5 1196.4 719.6" stroke-width="2"/>
 <path d="M1175 637 Q1186.7 629 1193.3 640 Q1194 648 1191.7 648.3 M1175 637 Q1173 650 1175 662" stroke-width="6"/>
 <path d="M1132 640 L1150 650 L1163 662 M1140 660 L1160 652" stroke-width="4"/>
 <path d="M1240 711.7 Q1269 729 1318 754.7 Q1350 770 1365 782 Q1381 798 1392.5 813 Q1400 837 1404 876" stroke-width="7"/>
 <path d="M729.7 579 Q744 575 760 569 Q768 566 772.4 565" stroke-width="3"/>
 <path d="M745 576 Q748 572 744 568 M752 573 Q760 580 768 583 M738 566 Q735 562 740 561" stroke-width="2.2"/>
 <path d="M756 570 Q754 560 758 556" stroke-width="2.2"/>
 <path d="M754 563 Q748 556 751 548 Q756 543 760 545 Q761 549 757 551" stroke-width="1.6" stroke-dasharray="1.5 2"/>
</g>
<g fill="none" stroke="#1ea3d6" stroke-linecap="round">
 <path d="M1066 584 Q1072 590 1078 594 Q1090 606 1099 614.7 Q1120 624 1140.6 627" stroke-width="5"/>
 <path d="M1047 584 Q1056 595 1063.3 601.7 Q1074 614 1083 622" stroke-width="4"/>
</g>
<g fill="#8cc6e2" opacity="0.8"><circle cx="1093" cy="591" r="4"/><circle cx="1101" cy="599" r="3.5"/><circle cx="1057" cy="607" r="4"/><circle cx="1044" cy="604" r="3.5"/></g>
<g fill="#dff0f7" opacity="0.9"><circle cx="1215.8" cy="701.7" r="15"/></g>
<path d="M972.4 680.3 C972.8 679.9 974.0 677.8 974.8 678.0 C975.6 678.2 977.4 680.2 977.1 681.5 C976.8 682.8 974.5 685.5 973.0 685.7 C971.5 685.9 969.0 684.4 968.3 682.7 C967.6 681.0 967.5 677.5 968.9 675.6 C970.3 673.7 974.2 671.6 976.5 671.5 C978.8 671.4 981.1 673.1 982.4 675.0 C983.7 676.9 984.4 679.9 984.2 682.7 C984.0 685.5 983.0 689.5 981.3 691.6 C979.6 693.7 976.1 694.9 974.2 695.1 C972.3 695.3 970.7 693.1 970.0 692.7 M987.2 673.9 C987.2 675.6 987.4 680.5 987.5 684.0 C987.6 687.5 987.7 693.2 987.7 695.1 M990.0 676.0 C991.3 675.6 997.3 672.5 997.8 673.9 C998.3 675.3 993.8 681.3 993.0 684.5 C992.2 687.7 992.4 691.5 993.0 693.3 C993.6 695.1 996.0 694.8 996.6 695.1 M997.8 685.7 C998.0 687.2 997.8 693.0 999.0 694.5 C1000.2 696.0 1003.6 696.0 1004.9 694.5 C1006.2 693.0 1006.2 685.7 1006.6 685.7 C1007.0 685.7 1006.4 694.4 1007.2 694.5 C1008.0 694.6 1011.1 687.1 1011.4 686.3 C1011.7 685.5 1008.7 688.8 1009.0 689.8 C1009.3 690.8 1012.8 691.3 1013.1 692.2 C1013.4 693.1 1011.6 694.8 1010.8 695.1 C1010.0 695.4 1008.8 694.1 1008.4 693.9 M1013.0 694.0 C1013.8 693.3 1016.1 691.1 1018.0 690.0 C1019.9 688.9 1023.1 686.6 1024.3 687.4 C1025.5 688.1 1024.1 693.9 1024.9 694.5 C1025.7 695.1 1028.3 691.6 1029.0 691.0 M1036.7 687.4 C1035.7 687.5 1032.1 687.0 1030.8 688.0 C1029.5 689.0 1028.6 692.1 1029.1 693.3 C1029.6 694.5 1032.2 695.2 1033.8 695.1 C1035.4 695.0 1037.7 693.1 1038.5 692.7" fill="none" stroke="#eef8fb" stroke-width="1.6" stroke-linecap="round"/><circle cx="1025.5" cy="683.9" r="1.1" fill="#eef8fb"/>
</svg>
<!-- Top panel -->
<div id="topshadow" class="abs"></div>
<div id="toppanel" class="abs">
  <svg class="abs" style="left:0;top:0" width="30" height="23">
    <circle cx="17.9" cy="11.2" r="6" fill="none" stroke="#e8782a" stroke-width="3.2"/>
    <path d="M21 6 A6 6 0 0 1 23.6 10" fill="none" stroke="#d85a28" stroke-width="3.2"/>
    <path d="M22.5 15.5 A6 6 0 0 1 14 15.8" fill="none" stroke="#b8302a" stroke-width="3.2"/>
    <path d="M12 13 A6 6 0 0 1 13.5 7" fill="none" stroke="#f0c038" stroke-width="3.2"/>
    <circle cx="23.5" cy="2.4" r="2.5" fill="#c82848" stroke="#f4f0ec" stroke-width="1"/>
    <circle cx="8.3" cy="11.2" r="2.5" fill="#e07040" stroke="#f4f0ec" stroke-width="1"/>
    <circle cx="23.5" cy="19.8" r="2.5" fill="#e8d040" stroke="#f4f0ec" stroke-width="1"/>
  </svg>
  <span class="ptxt" style="left:33px">Applications</span>
  <span class="ptxt" style="left:104px">Places</span>
  <span class="ptxt" style="left:147px">System</span>
  <svg class="abs" style="left:188px;top:0" width="70" height="22">
    <defs><radialGradient id="ffg" cx="0.4" cy="0.35" r="0.6"><stop offset="0" stop-color="#6aa6e0"/><stop offset="0.6" stop-color="#2a5aa8"/><stop offset="1" stop-color="#1a3a80"/></radialGradient>
    <linearGradient id="tmg" x1="0" y1="0" x2="1" y2="1"><stop offset="0" stop-color="#c8d0d8"/><stop offset="0.45" stop-color="#2a3c52"/><stop offset="1" stop-color="#1a2a40"/></linearGradient></defs>
    <circle cx="12" cy="10.5" r="10" fill="url(#ffg)"/>
    <path d="M3 7 Q2 16 9 19.5 Q16 22 20.5 15 Q22 10 19 5 Q19 10 15 12 Q11 14 8.5 12 Q6 10 7.5 7 Q5 8 3 7 Z" fill="#e8701a"/>
    <path d="M19 5 Q22 11 19.5 16" fill="none" stroke="#f4c030" stroke-width="2"/>
    <circle cx="29" cy="7.5" r="3.6" fill="#8fb6e0"/><path d="M23 18 Q23 11.5 29 11.5 Q33 11.5 34 14 L32 18 Z" fill="#8fb6e0"/>
    <circle cx="37" cy="9" r="4.2" fill="#58b828"/><path d="M30 20 Q30 13.5 37 13.5 Q44 13.5 44 20 Z" fill="#58b828"/>
    <rect x="47" y="4" width="18" height="12" fill="url(#tmg)"/>
  </svg>
  <svg class="abs" style="left:1208px;top:0" width="232" height="23">
    <path d="M3 4 V20" stroke="#b8b8b8" stroke-width="1" stroke-dasharray="1 2"/>
    <circle cx="19" cy="11" r="6.5" fill="#2a8ad8" stroke="#111" stroke-width="3"/>
    <circle cx="25" cy="17" r="3" fill="#f08a20"/>
    <rect x="31" y="7" width="11" height="9" fill="#5a7cb8" stroke="#9aa8b8" stroke-width="1"/>
    <rect x="36" y="2" width="11" height="9" fill="#6a8cc8" stroke="#9aa8b8" stroke-width="1"/>
    <path d="M30 18.5 H44" stroke="#c0c4c8" stroke-width="2"/>
    <path d="M52 8 L56 8 L61 3 L61 19 L56 14 L52 14 Z" fill="#c8c8c8" stroke="#707070" stroke-width="1"/>
    <path d="M64 7 Q66 11 64 15 M67 5 Q70.5 11 67 17 M70 3 Q75 11 70 19" fill="none" stroke="#6a7a90" stroke-width="1.1"/>
    <circle cx="83" cy="9" r="4.5" fill="#f8e070"/>
    <path d="M77 15 Q77 11 81 12 Q83 9 86 11 Q89 11 89 14 Q89 16 87 16 L79 16 Q77 16 77 15 Z" fill="#f4f4f4" stroke="#c0c8d0" stroke-width="0.6"/>
    <circle cx="221" cy="10" r="10.5" fill="#e8e7e4" stroke="#8a8a88" stroke-width="1"/>
    <path d="M217.5 7 A4.8 4.8 0 1 0 224.5 7" fill="none" stroke="#3a3a3a" stroke-width="1.4"/>
    <path d="M221 4.5 V10" stroke="#3a3a3a" stroke-width="1.4"/>
  </svg>
  <span class="ptxt" style="left:1299px">7 °C</span>
  <span class="ptxt" style="left:1331px;letter-spacing:-0.25px">Mon 26 Jan, 13:07</span>
</div>

<!-- File browser -->
<div class="win" style="left:45px;top:77px;width:653px;height:467px">
  <div class="title"><svg class="abs" style="left:7px;top:5px" width="12" height="10"><path d="M1 3 L3 1 L11 1 L11 9 L1 9 Z" fill="#cfd3d6"/><path d="M2 5 H10 M2 7 H10" stroke="#8a9095" stroke-width="1"/></svg><span class="ttxt" style="left:21px;color:#c9cdd2">/ - File Browser</span>
  <svg class="abs" style="left:610px;top:4px" width="38" height="11"><rect x="0.8" y="6.7" width="5.4" height="2.4" fill="#e6e6e6"/><rect x="14.4" y="2.6" width="6.3" height="6.3" fill="none" stroke="#e6e6e6" stroke-width="1.3"/><path d="M29.2 2.6 L35.6 9 M35.6 2.6 L29.2 9" stroke="#e6e6e6" stroke-width="2.1"/></svg></div>
  <div class="menubar" style="left:3px;top:19px;width:648px;height:15px;background:linear-gradient(#f4f3f1 0,#f4f3f1 1px,#e9e8e5 1px,#e6e5e2 100%)">
    <span class="mi" style="left:7px"><u>F</u>ile</span><span class="mi" style="left:35px"><u>E</u>dit</span><span class="mi" style="left:66px"><u>V</u>iew</span><span class="mi" style="left:101px"><u>G</u>o</span><span class="mi" style="left:126px"><u>B</u>ookmarks</span><span class="mi" style="left:190px"><u>T</u>abs</span><span class="mi" style="left:223px"><u>H</u>elp</span>
  </div>
  <div class="abs" style="left:3px;top:34px;width:648px;height:33px;background:linear-gradient(#fbfbfa 0,#fbfbfa 1px,#f3f2f0 2px,#e8e7e4 100%);border-top:1px solid #c2c0bc;border-bottom:1px solid #bdbbb7">
  </div>
  <div class="abs" style="left:3px;top:67px;width:648px;height:385px;background:#fff;overflow:hidden">
  </div>
  <div class="abs" style="left:3px;top:452px;width:648px;height:12px;background:#ebe9e6;border-top:1px solid #c0beba;font-size:10.5px;line-height:11px;padding-left:1px;color:#111">24 items, Free space: 9.0 GB<svg class="abs" style="left:636px;top:0" width="12" height="11"><g fill="#a8a6a2"><circle cx="9.5" cy="2" r="0.8"/><circle cx="6.5" cy="5" r="0.8"/><circle cx="9.5" cy="5" r="0.8"/><circle cx="3.5" cy="8" r="0.8"/><circle cx="6.5" cy="8" r="0.8"/><circle cx="9.5" cy="8" r="0.8"/></g></svg></div>
</div>
<svg class="abs" style="left:0;top:0" width="720" height="150">
 <defs>
  <linearGradient id="grn" x1="0" y1="0" x2="1" y2="0"><stop offset="0" stop-color="#6cbf3c"/><stop offset="1" stop-color="#c8e6b0"/></linearGradient>
  <linearGradient id="gry" x1="0" y1="0" x2="1" y2="0"><stop offset="0" stop-color="#e4e4e4"/><stop offset="1" stop-color="#d4d4d4"/></linearGradient>
  <linearGradient id="scr" x1="0" y1="0" x2="1" y2="1"><stop offset="0" stop-color="#e8f0f8"/><stop offset="0.5" stop-color="#3f7fbf"/><stop offset="1" stop-color="#1d4f88"/></linearGradient>
 </defs>
 <ellipse cx="66" cy="137" rx="9" ry="1.2" fill="#cfcfcf"/>
 <path d="M53.5 126.5 L63.5 117 L63.5 121.5 L75 121.5 L75 132 L63.5 132 L63.5 136.5 Z" fill="url(#grn)" stroke="#8fc06a" stroke-width="0.8"/>
 <path d="M84.5 125.5 L89 130 L93.5 125.5" fill="none" stroke="#111" stroke-width="2"/>
 <path d="M126 126.5 L116 117 L116 121.5 L104 121.5 L104 132 L116 132 L116 136.5 Z" fill="#dedede" stroke="#d2d2d2" stroke-width="0.8"/>
 <path d="M135.5 126 L139.5 129.5 L143.5 126" fill="none" stroke="#a8a8a8" stroke-width="1.3"/>
 <path d="M165.5 117 L175 127 L170 127 L170 137 L161 137 L161 127 L156 127 Z" fill="#e0e0e0" stroke="#d4d4d4" stroke-width="0.8"/>
 <path d="M190 117 L202 117 L206 121 L206 133 L202 137 L190 137 L186 133 L186 121 Z" fill="#cfcfcf" stroke="#c4c4c4" stroke-width="0.8"/>
 <path d="M193 124 L199 130 M199 124 L193 130" stroke="#f4f4f4" stroke-width="2.4"/>
 <path d="M218 128 Q218 119 228 119 L231 119 L231 116 L237 121.5 L231 127 L231 124 Q223 123 222 129 Z" fill="#b4d6f2" stroke="#6a9ed0" stroke-width="0.9"/>
 <path d="M234 127 Q234 136 224 136 L221 136 L221 139 L215 133.5 L221 128 L221 131 Q229 132 230 126 Z" fill="#b4d6f2" stroke="#6a9ed0" stroke-width="0.9"/>
 <path d="M246.5 116 L246.5 140" stroke="#cfcdc9" stroke-width="1"/>
 <path d="M318.5 116 L318.5 140" stroke="#cfcdc9" stroke-width="1"/>
 <path d="M258.5 120 L258.5 118.5 L265 118.5 L267 120.5 L276.5 120.5 L276.5 136.5 L258.5 136.5 Z" fill="#a8a898" stroke="#555548" stroke-width="1.2"/>
 <path d="M258.5 123.5 L276.5 123.5" stroke="#555548" stroke-width="1"/>
 <path d="M267.5 125 L272 129 L271 129 L271 133 L264 133 L264 129 L263 129 Z" fill="#f4f2e4"/>
 <rect x="288" y="118" width="20" height="14" fill="#dfe9f2" stroke="#c8d0d8" stroke-width="0.6"/>
 <rect x="289.5" y="119.5" width="17" height="9.5" fill="url(#scr)"/>
 <path d="M292 137 L304 137" stroke="#b8c0c8" stroke-width="1.5"/>
 <rect x="296" y="132" width="4" height="4" fill="#e4e8ec"/>
 <rect x="337" y="118" width="14" height="21" fill="#eeeeee" stroke="#d8d8d8" stroke-width="0.6"/>
 <circle cx="336.5" cy="124.5" r="6.2" fill="#dfeaf2" stroke="#5c6870" stroke-width="1.2"/>
 <path d="M341 129 L350 138" stroke="#222" stroke-width="3"/>
 <g transform="translate(677,122)" fill="#3a3a3a">
  <path d="M2 6 Q2 2 6 3 Q10 4 10 7 Q10 9 8 9 Q6.5 9 7 10.5 Q8 12.5 5.5 13 Q1 13 2 6 Z"/>
  <circle cx="3" cy="1.2" r="1.1"/><circle cx="5.6" cy="0.7" r="1.1"/><circle cx="8.3" cy="1.2" r="1.1"/><circle cx="10.4" cy="2.8" r="1"/>
 </g>
</svg>
<div class="abs" style="left:0;top:0">
<div class="lbl" style="left:53.3px;top:188.5px">bin</div>
<svg class="ico" style="left:87.3px;top:161.5px" width="32" height="23"><use href="#folder"/></svg>
<div class="lbl" style="left:156.6px;top:188.5px">boot</div>
<svg class="ico" style="left:190.6px;top:161.5px" width="32" height="23"><use href="#folder"/></svg>
<div class="lbl" style="left:259.9px;top:188.5px">cdrom</div>
<svg class="ico" style="left:293.9px;top:161.5px" width="32" height="23"><use href="#folder"/></svg>
<svg class="ico" style="left:318.9px;top:151.5px" width="16" height="11"><use href="#emb"/></svg>
<div class="lbl" style="left:363.2px;top:188.5px">dev</div>
<svg class="ico" style="left:397.2px;top:161.5px" width="32" height="23"><use href="#folder"/></svg>
<div class="lbl" style="left:466.5px;top:188.5px">etc</div>
<svg class="ico" style="left:500.5px;top:161.5px" width="32" height="23"><use href="#folder"/></svg>
<div class="lbl" style="left:569.8px;top:188.5px">home</div>
<svg class="ico" style="left:603.8px;top:161.5px" width="32" height="23"><use href="#folder"/></svg>
<div class="lbl" style="left:53.3px;top:249.5px">host</div>
<svg class="ico" style="left:87.3px;top:222.5px" width="32" height="23"><use href="#folder"/></svg>
<div class="lbl" style="left:156.6px;top:249.5px">lib</div>
<svg class="ico" style="left:190.6px;top:222.5px" width="32" height="23"><use href="#folder"/></svg>
<div class="lbl" style="left:259.9px;top:249.5px">lost+found</div>
<svg class="ico" style="left:293.9px;top:222.5px" width="32" height="23"><use href="#folder"/></svg>
<svg class="ico" style="left:316.9px;top:209.5px" width="17" height="17"><use href="#xemb"/></svg>
<div class="lbl" style="left:363.2px;top:249.5px">media</div>
<svg class="ico" style="left:397.2px;top:222.5px" width="32" height="23"><use href="#folder"/></svg>
<div class="lbl" style="left:466.5px;top:249.5px">mnt</div>
<svg class="ico" style="left:500.5px;top:222.5px" width="32" height="23"><use href="#folder"/></svg>
<div class="lbl" style="left:569.8px;top:249.5px">opt</div>
<svg class="ico" style="left:603.8px;top:222.5px" width="32" height="23"><use href="#folder"/></svg>
<div class="lbl" style="left:53.3px;top:302.5px">proc</div>
<svg class="ico" style="left:87.3px;top:275.5px" width="32" height="23"><use href="#folder"/></svg>
<div class="lbl" style="left:156.6px;top:302.5px">root</div>
<svg class="ico" style="left:190.6px;top:275.5px" width="32" height="23"><use href="#folder"/></svg>
<div class="lbl" style="left:259.9px;top:302.5px">sbin</div>
<svg class="ico" style="left:293.9px;top:275.5px" width="32" height="23"><use href="#folder"/></svg>
<div class="lbl" style="left:363.2px;top:302.5px">srv</div>
<svg class="ico" style="left:397.2px;top:275.5px" width="32" height="23"><use href="#folder"/></svg>
<div class="lbl" style="left:466.5px;top:302.5px">sys</div>
<svg class="ico" style="left:500.5px;top:275.5px" width="32" height="23"><use href="#folder"/></svg>
<div class="lbl" style="left:569.8px;top:302.5px">tmp</div>
<svg class="ico" style="left:603.8px;top:275.5px" width="32" height="23"><use href="#folder"/></svg>
<div class="lbl" style="left:53.3px;top:362.5px">usr</div>
<svg class="ico" style="left:87.3px;top:335.5px" width="32" height="23"><use href="#folder"/></svg>
<div class="lbl" style="left:156.6px;top:362.5px">var</div>
<svg class="ico" style="left:190.6px;top:335.5px" width="32" height="23"><use href="#folder"/></svg>
<div class="lbl" style="left:259.9px;top:362.5px">initrd.img</div>
<svg class="ico" style="left:293.9px;top:331.5px" width="32" height="30"><use href="#pkg"/></svg>
<svg class="ico" style="left:318.9px;top:325.5px" width="16" height="11"><use href="#emb"/></svg>
<div class="lbl" style="left:363.2px;top:362.5px">initrd.img.old</div>
<svg class="ico" style="left:397.2px;top:330.5px" width="32" height="32"><use href="#doc"/></svg>
<svg class="ico" style="left:422.2px;top:325.5px" width="16" height="11"><use href="#emb"/></svg>
<div class="lbl" style="left:466.5px;top:362.5px">vmlinuz</div>
<svg class="ico" style="left:500.5px;top:330.5px" width="32" height="32"><use href="#doc"/></svg>
<svg class="ico" style="left:525.5px;top:325.5px" width="16" height="11"><use href="#emb"/></svg>
<div class="lbl" style="left:569.8px;top:362.5px">vmlinuz.old</div>
<svg class="ico" style="left:603.8px;top:330.5px" width="32" height="32"><use href="#doc"/></svg>
<svg class="ico" style="left:628.8px;top:325.5px" width="16" height="11"><use href="#emb"/></svg>
</div>
<!-- Terminal -->
<div class="win" style="left:798px;top:222px;width:583px;height:363px">
  <div class="title"><svg class="abs" style="left:7px;top:6px" width="12" height="9"><path d="M1 2 L11 1 L9 8 L1 8 Z" fill="#cfd3d6"/></svg><span class="ttxt" style="left:21px;color:#f4f4f4">[hyb@uttråkad ~]</span>
  <svg class="abs" style="left:540px;top:4px" width="38" height="11"><rect x="0.8" y="6.7" width="5.4" height="2.4" fill="#f4f4f4"/><rect x="14.4" y="2.6" width="6.3" height="6.3" fill="none" stroke="#f4f4f4" stroke-width="1.3"/><path d="M29.2 2.6 L35.6 9 M35.6 2.6 L29.2 9" stroke="#f4f4f4" stroke-width="2.1"/></svg></div>
  <div class="menubar" style="left:3px;top:19px;width:577px;height:16px">
    <span class="mi" style="left:7px"><u>F</u>ile</span><span class="mi" style="left:35px"><u>E</u>dit</span><span class="mi" style="left:65px"><u>V</u>iew</span><span class="mi" style="left:100px"><u>T</u>erminal</span><span class="mi" style="left:154px"><u>T</u>abs</span><span class="mi" style="left:187px"><u>H</u>elp</span>
  </div>
  <div class="abs" style="left:3px;top:35px;width:562px;height:325px;background:#06181f;overflow:hidden">
    <svg class="abs" style="left:0;top:0" width="562" height="325"><g fill="#4a3a2c" opacity="0.24">
 <ellipse cx="24" cy="238" rx="14" ry="8" transform="rotate(-30 24 238)"/><ellipse cx="14" cy="222" rx="12" ry="7" transform="rotate(60 14 222)"/><ellipse cx="36" cy="220" rx="12" ry="7" transform="rotate(-70 36 220)"/>
 <path d="M60 325 Q70 270 120 262 Q150 262 150 290 Q130 280 115 295 Q100 310 105 325 Z"/>
 <path d="M160 325 Q170 290 215 285 Q240 290 236 310 Q215 300 200 325 Z"/>
 <path d="M300 325 Q330 270 380 268 Q420 272 424 305 Q400 290 370 300 Q350 312 345 325 Z"/>
 <path d="M425 185 Q431 220 436 325 L443 325 Q438 220 431 185 Z"/>
 <ellipse cx="427.0" cy="158.0" rx="12" ry="7" transform="rotate(-90 427.0 158.0)"/><ellipse cx="439.4" cy="167.0" rx="12" ry="7" transform="rotate(-18 439.4 167.0)"/><ellipse cx="434.6" cy="181.5" rx="12" ry="7" transform="rotate(54 434.6 181.5)"/><ellipse cx="419.4" cy="181.5" rx="12" ry="7" transform="rotate(126 419.4 181.5)"/><ellipse cx="414.6" cy="167.0" rx="12" ry="7" transform="rotate(198 414.6 167.0)"/><ellipse cx="412" cy="215" rx="14" ry="6" transform="rotate(35 412 215)"/><ellipse cx="452" cy="208" rx="14" ry="6" transform="rotate(-35 452 208)"/>
 <path d="M380 262 Q400 230 436 260 Q420 240 395 245 Z"/>
 <path d="M444 300 Q470 250 510 255 Q490 265 470 290 Z"/>
 <circle cx="340" cy="232" r="4"/><circle cx="352" cy="226" r="4"/><circle cx="364" cy="230" r="4"/><circle cx="330" cy="242" r="4"/><circle cx="326" cy="256" r="4"/><circle cx="332" cy="268" r="4"/>
 <path d="M400 325 Q420 300 460 300 Q500 305 505 325 Z"/>
 <path d="M500 280 Q520 230 560 215 L562 240 Q530 250 515 290 Z"/>
 <path d="M480 235 Q500 200 540 200 Q520 215 505 240 Z"/>
 <path d="M70 325 Q90 290 140 300 Q170 310 180 325 Z"/>
 <path d="M250 325 Q270 285 320 290 Q360 300 365 325 Z"/>
 <ellipse cx="44" cy="270" rx="10" ry="6" transform="rotate(20 44 270)"/><ellipse cx="30" cy="252" rx="8" ry="5" transform="rotate(-40 30 252)"/>
 <path d="M150 260 Q175 240 200 255 Q185 262 170 275 Z"/>
</g></svg>
    <pre id="tt"><span style="position:relative;top:3px"> _______________________________________</span>
/ Noise proves nothing. Often a hen who \
| has merely laid an egg cackles as if  |
\ she laid an asteroid. -- Mark Twain   /
 ---------------------------------------
    \
     \
                                   .::!!!!!!!:.
  .!!!!!:.                        .:!!!!!!!!!!!!
  ~~~~!!!!!!.                 .:!!!!!!!!!UWWW$$$
      :$$NWX!!:           .:!!!!!!XUWW$$$$$$$$$P
      $$$$$##WX!:      .&lt;!!!!UW$$$$"  $$$$$$$$#
      $$$$$  $$$UX   :!!UW$$$$$$$$$   4$$$$$*
      ^$$$B  $$$$\     $$$$$$$$$$$$   d$$R"
        "*$bd$$$$      '*$$$$$$$$$$$o+#"
             """"          """""""
[hyb@uttråkad ~]$ scrot Desktop/shot.jpg -cd 5 -q 80
Taking shot in 5.. 4.. 3.. 2.. 1.. <span style="display:inline-block;vertical-align:top;width:7px;height:17px;background:#f4f4f4"></span></pre>
  </div>
  <div class="abs" style="left:565px;top:35px;width:15px;height:325px;background:linear-gradient(to right,#a9c3ec,#8fb0e0);border-left:1px solid #6d8fc4">
    <div class="abs" style="left:0;top:0;width:14px;height:15px;background:linear-gradient(#fdfdfc,#e6e4e0);border:1px solid #b8b6b2"></div>
    <div class="abs" style="left:0;top:310px;width:14px;height:15px;background:linear-gradient(#fdfdfc,#e6e4e0);border:1px solid #b8b6b2"></div>
    <svg class="abs" style="left:0;top:0" width="14" height="325"><path d="M3.5 9.5 L7 6 L10.5 9.5" fill="none" stroke="#a8a8a8" stroke-width="1.2"/><path d="M3.5 316 L7 319.5 L10.5 316" fill="none" stroke="#a8a8a8" stroke-width="1.2"/><path d="M4 159 H10 M4 161.5 H10 M4 164 H10" stroke="#6080b8" stroke-width="0.8"/></svg>
  </div>
</div>

<!-- Bottom panel -->
<div id="botshadow" class="abs"></div>
<div id="botpanel" class="abs">
  <svg class="abs" style="left:0;top:2px" width="32" height="22">
    <rect x="1.5" y="1.5" width="21" height="19" rx="2" fill="#dfe5d8" stroke="#5f7aa0" stroke-width="1.2"/>
    <path d="M1 5 L5 1 M19 1 L23 5 M1 17 L5 21 M19 21 L23 17" stroke="#4a78b8" stroke-width="2.5"/>
    <rect x="6" y="5" width="12" height="11" fill="#f4f0e8" stroke="#9a8a78" stroke-width="0.8"/>
    <path d="M9 15 L17 7" stroke="#f0a020" stroke-width="3"/><path d="M9 15 L11 13" stroke="#222" stroke-width="2"/>
    <path d="M28.5 3 V21" stroke="#c8a8a8" stroke-width="1.2" stroke-dasharray="1 2.5"/>
  </svg>
  <div class="task" style="left:34px;width:156px">
    <svg class="abs" style="left:5px;top:4px" width="15" height="16"><circle cx="7" cy="5" r="3" fill="#f0e080"/><ellipse cx="7.5" cy="11.5" rx="6" ry="4.5" fill="#f4e28a"/></svg>
    <span class="ttask" style="left:28px">[a0</span><span class="ttask" style="left:78px">trish says: i ...</span>
  </div>
  <div class="task" style="left:191px;width:156px">
    <svg class="abs" style="left:5px;top:3px" width="15" height="17"><rect x="1.5" y="1.5" width="12" height="14" rx="1.5" fill="#eeeeee" stroke="#6a6a6a" stroke-width="1"/><rect x="3.5" y="5" width="8" height="3" fill="none" stroke="#777" stroke-width="0.8"/><rect x="3.5" y="9.5" width="8" height="3" fill="none" stroke="#777" stroke-width="0.8"/></svg>
    <span class="ttask" style="left:28px">/ - File Browser</span>
  </div>
  <div class="task" style="left:348px;width:158px;background:linear-gradient(#d9d7d3,#cfccc8);border-color:#a9a7a3">
    <svg class="abs" style="left:6px;top:6px" width="15" height="11"><rect x="0.5" y="0.5" width="14" height="10" fill="url(#tmg)"/></svg>
    <span class="ttask" style="left:29px">[hyb@uttråkad ~]</span>
  </div>
  <span class="ptxt" style="left:1306px;top:5px">GBr</span>
  <span class="ptxt" style="left:1332px;top:5px">1</span>
  <div class="abs" style="left:1359px;top:3px;width:58px;height:19px;border-radius:2px;background:linear-gradient(to right,#4a76b2 0,#4a76b2 29px,#fff 29px,#fff 30px,#b1aba7 30px)">
    <div class="abs" style="left:1px;top:2px;width:13px;height:9px;background:#8aa8d8;border:1.5px solid #fff"></div>
    <div class="abs" style="left:15px;top:5px;width:13px;height:7px;background:#d8e4f4;border:1px solid #fff"></div>
  </div>
  <svg class="abs" style="left:1420px;top:3px" width="20" height="20"><path d="M2 4 Q2 2 4 2 L16 2 Q18 2 18 4 L18 18 L2 18 Z" fill="#3c70b8"/><path d="M2 6 Q10 4 18 6" fill="none" stroke="#a8c0e0" stroke-width="1.5"/></svg>
</div>
</body></html>
